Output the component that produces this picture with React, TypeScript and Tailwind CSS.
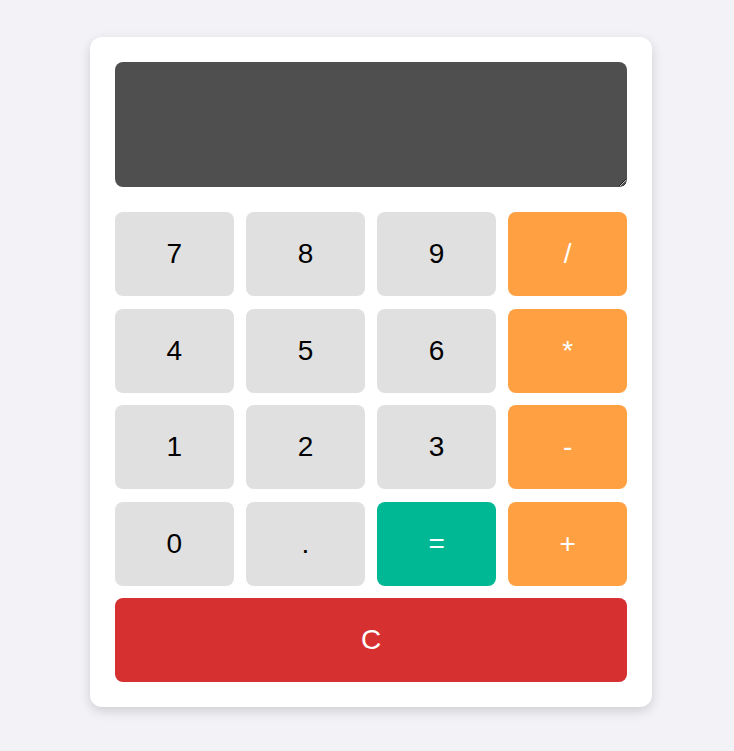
import { useState } from 'react';

const keys = [
  { label: '7', kind: 'num' },
  { label: '8', kind: 'num' },
  { label: '9', kind: 'num' },
  { label: '/', kind: 'op' },
  { label: '4', kind: 'num' },
  { label: '5', kind: 'num' },
  { label: '6', kind: 'num' },
  { label: '*', kind: 'op' },
  { label: '1', kind: 'num' },
  { label: '2', kind: 'num' },
  { label: '3', kind: 'num' },
  { label: '-', kind: 'op' },
  { label: '0', kind: 'num' },
  { label: '.', kind: 'num' },
  { label: '=', kind: 'eq' },
  { label: '+', kind: 'op' },
];

const styles: Record<string, string> = {
  num: 'bg-[#e0e0e0] text-black',
  op: 'bg-[#ffa043] text-white',
  eq: 'bg-[#00b894] text-white',
};

export default function App() {
  const [display, setDisplay] = useState('');

  const press = (k: string) => {
    if (k === '=') {
      try {
        // eslint-disable-next-line no-new-func
        setDisplay(String(Function(`return (${display})`)()));
      } catch {
        setDisplay('Error');
      }
      return;
    }
    setDisplay(display + k);
  };

  return (
    <div className="min-h-screen bg-[#f2f2f7] pt-[37px] pl-[90px] font-['Liberation_Sans',Arial,sans-serif]">
      <div className="w-[562px] bg-white rounded-xl p-[25px] shadow-[0_4px_12px_rgba(0,0,0,0.15)]">
        <textarea
          value={display}
          onChange={(e) => setDisplay(e.target.value)}
          className="block w-full h-[125px] bg-[#4f4f4f] text-white rounded-lg p-3 text-[28px] outline-none border-0"
        />
        <div className="grid grid-cols-4 gap-[12.5px] mt-[25px]">
          {keys.map((k) => (
            <button
              key={k.label}
              onClick={() => press(k.label)}
              className={`h-[84px] rounded-lg text-[28px] ${styles[k.kind]}`}
            >
              {k.label}
            </button>
          ))}
          <button
            onClick={() => setDisplay('')}
            className="col-span-4 h-[84px] rounded-lg text-[28px] bg-[#d63031] text-white"
          >
            C
          </button>
        </div>
      </div>
    </div>
  );
}
